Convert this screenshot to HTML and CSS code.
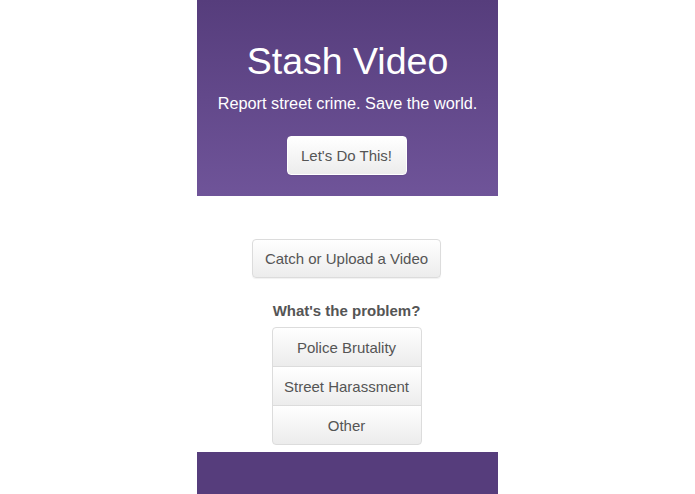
FILE: index.html
```html
<!DOCTYPE html>
<html lang="en">
<head>
    <meta charset="UTF-8">
    <meta name="viewport" content="width=device-width, initial-scale=1.0">
    <title>Stash Video</title>
    <link rel="stylesheet" href="styles.css">
</head>
<body>
    <div class="page">
        <div class="hero">
            <h1>Stash Video</h1>
            <p class="lead">Report street crime. Save the world.</p>
            <button class="btn">Let's Do This!</button>
        </div>
        <div class="content">
            <button class="btn btn-catch">Catch or Upload a Video</button>
            <h4>What's the problem?</h4>
            <div class="btn-group">
                <button class="btn">Police Brutality</button>
                <button class="btn">Street Harassment</button>
                <button class="btn">Other</button>
            </div>
        </div>
        <div class="footer"></div>
    </div>
</body>
</html>
```

FILE: styles.css
```css
body {
    margin: 0;
    background-color: white;
    font-family: 'Liberation Sans', Arial, sans-serif;
    color: #555;
}
.page {
    width: 301px;
    margin: 0 auto;
}
.hero {
    height: 196px;
    box-sizing: border-box;
    padding-top: 40px;
    text-align: center;
    color: white;
    background: linear-gradient(to bottom, #563d7c 0%, #6f5499 100%);
}
.hero h1 {
    margin: 0;
    font-size: 37.5px;
    font-weight: normal;
    line-height: 42px;
}
.lead {
    margin: 9px 0 21px;
    font-size: 16.3px;
    line-height: 24px;
}
.btn {
    display: block;
    box-sizing: border-box;
    padding: 0 10px;
    font-family: inherit;
    font-size: 15px;
    line-height: 17px;
    white-space: nowrap;
    color: #555;
    background: linear-gradient(to bottom, #ffffff 0%, #ececec 100%);
    border: 1px solid #dcdcdc;
    border-radius: 4px;
    box-shadow: 0 1px 1px rgba(0,0,0,.06);
    cursor: pointer;
}
.hero .btn {
    margin: 0 auto;
    width: 120px;
    height: 39px;
    border-color: #fff;
    position: relative;
    left: -1px;
}
.content {
    padding: 43px 2px 7px 0;
    text-align: center;
}
.btn-catch {
    margin: 0 auto;
    width: 189px;
    height: 39px;
}
.content h4 {
    margin: 24px 0 7px;
    font-size: 15px;
    line-height: 18px;
    font-weight: bold;
}
.btn-group {
    display: flex;
    flex-direction: column;
    width: 150px;
    margin: 0 auto;
}
.btn-group .btn {
    width: 100%;
    height: 40px;
    border-radius: 0;
    margin-top: -1px;
    box-shadow: none;
}
.btn-group .btn:first-child {
    margin-top: 0;
    border-radius: 4px 4px 0 0;
}
.btn-group .btn:last-child {
    border-radius: 0 0 4px 4px;
}
.footer {
    height: 50px;
    background-color: #563d7c;
}
```
